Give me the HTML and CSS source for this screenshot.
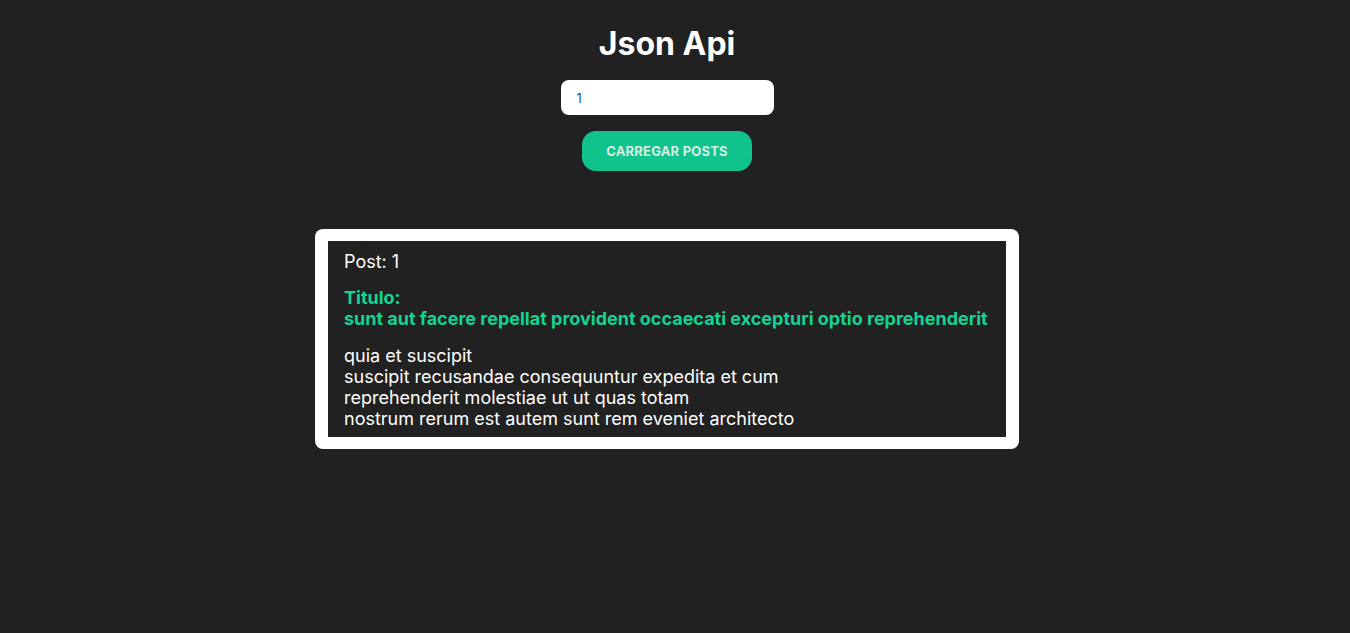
FILE: index.html
```html
<!DOCTYPE html>
<html lang="pt-BR">
<head>
<meta charset="UTF-8">
<title>Json Api</title>
<link rel="stylesheet" href="styles.css">
</head>
<body>
<main class="app">
  <h1 class="title">Json Api</h1>
  <input class="post-input" type="text" value="1">
  <button class="load-btn">CARREGAR POSTS</button>
  <section class="card">
    <div class="card-inner">
      <p class="post-id">Post: 1</p>
      <h2 class="post-title">Titulo:<br>sunt aut facere repellat provident occaecati excepturi optio reprehenderit</h2>
      <p class="post-body">quia et suscipit<br>suscipit recusandae consequuntur expedita et cum<br>reprehenderit molestiae ut ut quas totam<br>nostrum rerum est autem sunt rem eveniet architecto</p>
    </div>
  </section>
</main>
</body>
</html>
```
FILE: styles.css
```css
* { box-sizing: border-box; }
html, body { margin: 0; padding: 0; }
body {
  background: #212121;
  color: #ffffff;
  font-family: Inter, "Noto Sans", sans-serif;
  min-height: 633px;
}
.app {
  display: flex;
  flex-direction: column;
  align-items: center;
  padding: 24px 16px 0 0;
}
.title {
  margin: 0;
  font-size: 32px;
  font-weight: 700;
  line-height: 39px;
}
.post-input {
  margin-top: 17px;
  width: 213px;
  height: 35px;
  border: none;
  border-radius: 8px;
  background: #ffffff;
  padding: 0 16px;
  font-family: Inter, "Noto Sans", sans-serif;
  font-size: 13px;
  color: #0b57a8;
  outline: none;
}
.load-btn {
  margin-top: 16px;
  width: 170px;
  height: 40px;
  border: none;
  border-radius: 14px;
  background: #10c38c;
  color: #d9ece4;
  font-family: Inter, "Noto Sans", sans-serif;
  font-size: 13px;
  font-weight: 700;
  letter-spacing: 0.2px;
}
.card {
  margin-top: 58px;
  width: 704px;
  background: #ffffff;
  border-radius: 8px;
  padding: 12px 13px 12px 13px;
}
.card-inner {
  background: #212121;
  padding: 10px 16px 8px 16px;
}
.post-id {
  margin: 0;
  font-size: 18px;
  line-height: 22px;
}
.post-title {
  margin: 14px 0 0 0;
  font-size: 18px;
  font-weight: 700;
  line-height: 21px;
  color: #14d393;
}
.post-body {
  margin: 16px 0 0 0;
  font-size: 18px;
  line-height: 21px;
}
```
